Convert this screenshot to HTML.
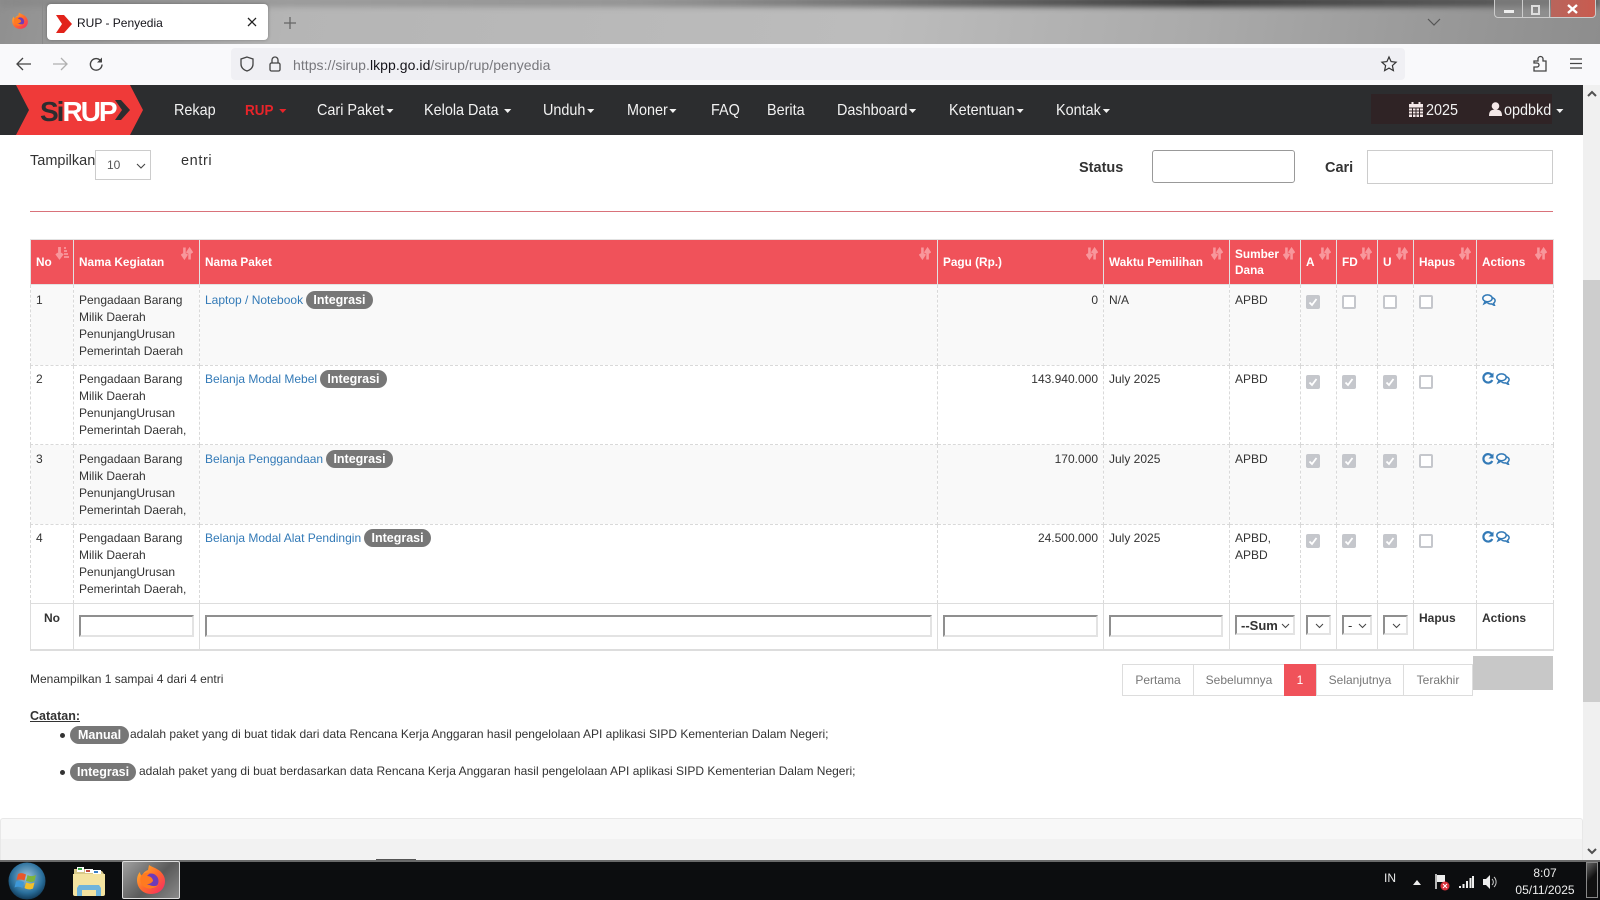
<!DOCTYPE html>
<html lang="id">
<head>
<meta charset="utf-8">
<title>RUP - Penyedia</title>
<style>
html,body{margin:0;padding:0;width:1600px;height:900px;overflow:hidden;background:#fff;font-family:"Liberation Sans",sans-serif;color:#333;}
.a{position:absolute;white-space:nowrap;}
svg{position:absolute;overflow:visible;}
#chrome{position:absolute;left:0;top:0;width:1600px;height:44px;background:linear-gradient(100deg,#8f8f8f 0%,#b5b5b5 18%,#bcbcbc 55%,#aaa 75%,#8d8d8d 100%);overflow:hidden;}
#chrome:before{content:"";position:absolute;left:0;right:0;top:-3px;height:10px;background:linear-gradient(90deg,rgba(120,120,120,.3),rgba(90,90,90,.4) 40%,rgba(30,30,30,.8) 75%,rgba(60,60,60,.6));filter:blur(3px);}
#tab{position:absolute;left:47px;top:4px;width:221px;height:36px;background:#fff;border-radius:4px;box-shadow:0 0 3px rgba(0,0,0,.3);}
#toolbar{position:absolute;left:0;top:44px;width:1600px;height:41px;background:#f9f9fb;}
#url{position:absolute;left:231px;top:48px;width:1174px;height:32px;background:#f0f0f4;border-radius:4px;}
#nav{position:absolute;left:0;top:85px;width:1583px;height:50px;background:#2c2d2f;}
.n{position:absolute;top:86px;height:50px;line-height:50px;font-size:16px;color:#f2f2f2;white-space:nowrap;transform:scaleX(.9);transform-origin:0 50%;}
.n i,.c{display:inline-block;width:0;height:0;border-left:4px solid transparent;border-right:4px solid transparent;border-top:4px solid currentColor;vertical-align:middle;margin-left:2px;}
#sb{position:absolute;left:1583px;top:85px;width:17px;height:775px;background:#f0f0f0;}
#th{position:absolute;left:1583px;top:280px;width:17px;height:422px;background:#cdcdcd;}
table{position:absolute;left:30px;top:239px;width:1523px;border-collapse:collapse;table-layout:fixed;font-size:12px;color:#333;}
td,th{box-sizing:border-box;padding:7px 5px 0;vertical-align:top;line-height:17px;position:relative;text-align:left;}
thead th{height:45px;background:#f0525a;color:#fff;font-weight:bold;font-size:11.8px;border:1px solid #e2e2e2;vertical-align:middle;padding:0 5px;white-space:normal;}
tbody td{border:1px dashed #d9d9d9;}
tr.r2 td{padding-top:5px;}
tr.r3 td{padding-top:6px;}
tr.o td{background:#f9f9f9;}
tr.f td{border:1px solid #ddd;height:47px;background:#fff;font-weight:bold;padding-top:6px;}
a{color:#337ab7;text-decoration:none;}
.b{display:inline-block;background:#777;color:#fff;font-weight:bold;font-size:12.5px;line-height:18px;height:18px;border-radius:10px;padding:0 7px;margin-top:-1px;vertical-align:top;}
.k{position:absolute;box-sizing:border-box;width:14px;height:14px;border:2px solid #c5c7cc;border-radius:2px;background:#fff;}
.k.y{background:#c5c7cc;}
.k.y svg{left:0;top:0;}
.i{position:absolute;box-sizing:border-box;background:#fff;border:2px solid;border-color:#8f8f8f #e3e3e3 #e3e3e3 #8f8f8f;}
.s{font-size:13px;font-weight:bold;line-height:17px;color:#333;overflow:hidden;}
.pg{position:absolute;box-sizing:border-box;top:664px;height:32px;line-height:30px;border:1px solid #ddd;font-size:12px;color:#777;text-align:center;background:#fff;}
.sort{top:7px;}
</style>
</head>
<body>
<svg width="0" height="0" style="position:absolute">
<defs>
<symbol id="so" viewBox="0 0 14 14"><path d="M4 0v10M1 7.500 4 12l3-4.500M10 14V4M7 6.500 10 2l3 4.500" fill="none" stroke="#f8979c" stroke-width="3"/></symbol>
<symbol id="cm" viewBox="0 0 14 12"><ellipse cx="5.500" cy="4.300" rx="4.700" ry="3.400" fill="#fff" fill-opacity=".5" stroke="#337ab7" stroke-width="1.500"/><path d="M3 7.500 2 9.800 5.500 8M9.500 3.500c2.500.5 4 2 3.500 3.800-.3 1-.8 1.500-1.500 2l1 2.200-3-1.600c-1.500.2-3-.2-4-1" fill="none" stroke="#337ab7" stroke-width="1.500"/></symbol>
<symbol id="rf" viewBox="0 0 12 12"><path d="M10 3.200A4.700 4.700 0 1 0 10.300 8" fill="none" stroke="#337ab7" stroke-width="2.200"/><path d="M11.500 .5v5h-5z" fill="#337ab7"/></symbol>
<symbol id="ck" viewBox="0 0 10 10"><path d="M1.500 5.500 4 8 8.500 2" fill="none" stroke="#fff" stroke-width="1.800"/></symbol>
<symbol id="ff" viewBox="0 0 32 32"><defs><linearGradient id="fg" x1="0" y1="0" x2="1" y2="1"><stop offset="0" stop-color="#ffbd2e"/><stop offset=".5" stop-color="#ff6a2b"/><stop offset="1" stop-color="#f5256b"/></linearGradient></defs><path d="M16 30C8 30 2 24 2 16c0-3 1-6 3-8 0 2 1 3 2 4 1-3 3-5 6-6l1-5c3 2 7 3 11 6 3 3 5 6 5 10 0 8-6 13-14 13z" fill="url(#fg)"/><circle cx="16" cy="17" r="7.500" fill="#6f3bb8"/><path d="M6 12c2-3 6-4 9-3l-3 3c3 0 6 2 6 5-2 3-6 4-9 2 4 1 9 5 14 2-4 5-14 5-17-2-1-3-1-5 0-7z" fill="#ff7a20"/></symbol>
</defs>
</svg>

<div id="chrome">
  <svg style="left:11px;top:12px" width="18" height="18"><use href="#ff" width="18" height="18"/></svg>
  <div class="a" style="left:42px;top:0;width:1px;height:44px;background:#8a8a8a"></div>
  <div id="tab"></div>
  <svg style="left:56px;top:15px" width="16" height="18"><path d="M0 0h8l8 9-8 9H0l6-9z" fill="#e2231a"/></svg>
  <div class="a" style="left:77px;top:14px;font-size:12px;line-height:18px;color:#15141a">RUP - Penyedia</div>
  <svg style="left:247px;top:17px" width="10" height="10"><path d="M1 1l8 8M9 1l-8 8" stroke="#222" stroke-width="1.300" fill="none"/></svg>
  <svg style="left:284px;top:17px" width="12" height="12"><path d="M6 0v12M0 6h12" stroke="#666" stroke-width="1.300" fill="none"/></svg>
  <svg style="left:1428px;top:19px" width="12" height="7"><path d="M0 0l6 6 6-6" stroke="#555" stroke-width="1.200" fill="none"/></svg>
  <div class="a" style="left:1494px;top:-2px;width:102px;height:20px;box-sizing:border-box;border:1px solid #ccc;border-radius:0 0 4px 4px;background:linear-gradient(90deg,rgba(140,140,140,.6) 0,rgba(140,140,140,.6) 56%,#b8655c 56%,#c95b4f 100%)"></div>
  <div class="a" style="left:1522px;top:0;width:1px;height:17px;background:#ccc"></div>
  <div class="a" style="left:1549px;top:0;width:1px;height:17px;background:#ccc"></div>
  <div class="a" style="left:1504px;top:10px;width:10px;height:3px;background:#eee"></div>
  <div class="a" style="left:1531px;top:5px;width:5px;height:6px;border:2px solid #ddd"></div>
  <svg style="left:1567px;top:4px" width="11" height="10"><path d="M1 1l9 8M10 1l-9 8" stroke="#fff" stroke-width="2.400" fill="none"/></svg>
</div>

<div id="toolbar"></div>
<div id="url"></div>
<svg style="left:16px;top:57px" width="16" height="14"><path d="M15 7H2M7 1 1 7l6 6" fill="none" stroke="#444" stroke-width="1.300"/></svg>
<svg style="left:52px;top:57px" width="16" height="14"><path d="M1 7h13M9 1l6 6-6 6" fill="none" stroke="#b0b0b0" stroke-width="1.300"/></svg>
<svg style="left:89px;top:57px" width="15" height="15"><path d="M13 7.500A5.800 5.800 0 1 1 11 3" fill="none" stroke="#444" stroke-width="1.400"/><path d="M13 .5v5H8z" fill="#444"/></svg>
<svg style="left:240px;top:56px" width="14" height="16"><path d="M7 1 1 3v5c0 4 3 6 6 7 3-1 6-3 6-7V3z" fill="none" stroke="#444" stroke-width="1.300"/></svg>
<svg style="left:269px;top:56px" width="12" height="16"><rect x="1" y="7" width="10" height="8" rx="1.500" fill="none" stroke="#444" stroke-width="1.300"/><path d="M3 7V4a3 3 0 0 1 6 0v3" fill="none" stroke="#444" stroke-width="1.300"/></svg>
<div class="a" style="left:293px;top:56px;font-size:14px;line-height:18px;color:#77777c;letter-spacing:.05px">https://sirup.<span style="color:#15141a">lkpp.go.id</span>/sirup/rup/penyedia</div>
<svg style="left:1381px;top:56px" width="16" height="16"><path d="M8 1l2.100 4.600 5 .6-3.700 3.400 1 5L8 12.100 3.600 14.600l1-5L.9 6.200l5-.6z" fill="none" stroke="#333" stroke-width="1.200"/></svg>
<svg style="left:1533px;top:55px" width="16" height="18"><path d="M1 6h4V4a2.500 2.500 0 0 1 5 0v2h3v10H1v-4h3a2 2 0 0 0 0-4H1z" fill="none" stroke="#444" stroke-width="1.300"/></svg>
<svg style="left:1570px;top:58px" width="12" height="11"><path d="M0 1h12M0 5.500h12M0 10h12" stroke="#444" stroke-width="1.200"/></svg>

<div id="nav"></div>
<svg style="left:16px;top:85px" width="128" height="50"><path d="M0 0H114L127 25 114 50H0L13 25z" fill="#ef3a39"/>
<text x="24" y="36" font-family="Liberation Sans" font-weight="bold" font-size="28" letter-spacing="-2" fill="#2c2d2f">Si<tspan fill="#fff">RUP</tspan></text>
<path d="M99 15h6l9 10-9 10h-6l7-10z" fill="#2c2d2f"/></svg>
<div class="n" style="left:174px">Rekap</div>
<div class="n" style="left:245px;color:#e8242a;font-weight:bold;font-size:15px">RUP <i></i></div>
<div class="n" style="left:317px">Cari Paket<i></i></div>
<div class="n" style="left:424px">Kelola Data <i></i></div>
<div class="n" style="left:543px">Unduh<i></i></div>
<div class="n" style="left:627px">Moner<i></i></div>
<div class="n" style="left:711px">FAQ</div>
<div class="n" style="left:767px">Berita</div>
<div class="n" style="left:837px">Dashboard<i></i></div>
<div class="n" style="left:949px">Ketentuan<i></i></div>
<div class="n" style="left:1056px">Kontak<i></i></div>
<div class="a" style="left:1371px;top:94px;width:181px;height:30px;background:#2f2325"></div>
<svg style="left:1409px;top:102px" width="14" height="15"><path d="M0 2h14v13H0z" fill="#f4e8e8"/><path d="M0 6h14M0 9h14M0 12h14M3.500 6v9M7 6v9M10.500 6v9" stroke="#2f2325"/><path d="M3.500 0v3M10.500 0v3" stroke="#f4e8e8" stroke-width="2"/></svg>
<div class="n" style="left:1426px">2025</div>
<svg style="left:1489px;top:102px" width="13" height="15"><circle cx="6.500" cy="4" r="3.800" fill="#f4e8e8"/><path d="M0 14c0-5 2-6.500 6.500-6.500S13 9 13 14z" fill="#f4e8e8"/></svg>
<div class="n" style="left:1504px">opdbkd <i style="margin-left:1px"></i></div>

<div id="sb"></div>
<div id="th"></div>
<svg style="left:1587px;top:90px" width="10" height="7"><path d="M1 6l4-4 4 4" stroke="#505050" stroke-width="2" fill="none"/></svg>
<svg style="left:1587px;top:848px" width="10" height="7"><path d="M1 1l4 4 4-4" stroke="#505050" stroke-width="2" fill="none"/></svg>

<!-- filter bar -->
<div class="a" style="left:30px;top:152px;width:65px;overflow:hidden;font-size:14.500px;line-height:18px;color:#333">Tampilkan</div>
<div class="a" style="left:95px;top:150px;box-sizing:border-box;width:56px;height:30px;background:#fff;border:1px solid #ccc;font-size:12px;line-height:28px;padding-left:11px;color:#555">10</div>
<svg style="left:136px;top:163px" width="10" height="6"><path d="M1 1l4 4 4-4" stroke="#444" stroke-width="1.100" fill="none"/></svg>
<div class="a" style="left:181px;top:152px;font-size:14.500px;line-height:18px;letter-spacing:.6px">entri</div>
<div class="a" style="left:1079px;top:159px;font-size:14.500px;font-weight:bold;line-height:18px">Status</div>
<div class="a" style="left:1152px;top:150px;box-sizing:border-box;width:143px;height:33px;border:1px solid #999;border-radius:3px;background:#fff"></div>
<div class="a" style="left:1325px;top:159px;font-size:14.500px;font-weight:bold;line-height:18px">Cari</div>
<div class="a" style="left:1367px;top:150px;box-sizing:border-box;width:186px;height:34px;border:1px solid #ccc;background:#fff"></div>
<div class="a" style="left:30px;top:211px;width:1523px;height:1px;background:#d9727a"></div>

<table>
<colgroup><col style="width:43px"><col style="width:126px"><col style="width:738px"><col style="width:166px"><col style="width:126px"><col style="width:71px"><col style="width:36px"><col style="width:41px"><col style="width:36px"><col style="width:63px"><col style="width:77px"></colgroup>
<thead><tr>
<th>No<svg class="sort" style="left:25px" width="13" height="13"><path d="M3.500 0v9M.5 6.500l3 4 3-4" stroke="#f8979c" stroke-width="2.800" fill="none"/><path d="M8 1h2M8 4h3M8 7h4M8 10h5" stroke="#f8979c" stroke-width="1.800"/></svg></th>
<th>Nama Kegiatan<svg class="sort" style="left:107px" width="12" height="13"><use href="#so" width="12" height="13"/></svg></th>
<th>Nama Paket<svg class="sort" style="left:719px" width="12" height="13"><use href="#so" width="12" height="13"/></svg></th>
<th>Pagu (Rp.)<svg class="sort" style="left:148px" width="12" height="13"><use href="#so" width="12" height="13"/></svg></th>
<th>Waktu Pemilihan<svg class="sort" style="left:107px" width="12" height="13"><use href="#so" width="12" height="13"/></svg></th>
<th style="line-height:16.500px">Sumber<br>Dana<svg class="sort" style="left:53px" width="12" height="13"><use href="#so" width="12" height="13"/></svg></th>
<th>A<svg class="sort" style="left:18px" width="12" height="13"><use href="#so" width="12" height="13"/></svg></th>
<th>FD<svg class="sort" style="left:23px" width="12" height="13"><use href="#so" width="12" height="13"/></svg></th>
<th>U<svg class="sort" style="left:18px" width="12" height="13"><use href="#so" width="12" height="13"/></svg></th>
<th>Hapus<svg class="sort" style="left:45px" width="12" height="13"><use href="#so" width="12" height="13"/></svg></th>
<th>Actions<svg class="sort" style="left:58px" width="12" height="13"><use href="#so" width="12" height="13"/></svg></th>
</tr></thead>
<tbody>
<tr class="o" style="height:81px"><td>1</td><td>Pengadaan Barang<br>Milik Daerah<br>PenunjangUrusan<br>Pemerintah Daerah</td><td><a>Laptop / Notebook</a> <span class="b">Integrasi</span></td><td style="text-align:right">0</td><td>N/A</td><td>APBD</td><td></td><td></td><td></td><td></td><td></td></tr>
<tr class="r2" style="height:79px"><td>2</td><td>Pengadaan Barang<br>Milik Daerah<br>PenunjangUrusan<br>Pemerintah Daerah,</td><td><a>Belanja Modal Mebel</a> <span class="b">Integrasi</span></td><td style="text-align:right">143.940.000</td><td>July 2025</td><td>APBD</td><td></td><td></td><td></td><td></td><td></td></tr>
<tr class="o r3" style="height:80px"><td>3</td><td>Pengadaan Barang<br>Milik Daerah<br>PenunjangUrusan<br>Pemerintah Daerah,</td><td><a>Belanja Penggandaan</a> <span class="b">Integrasi</span></td><td style="text-align:right">170.000</td><td>July 2025</td><td>APBD</td><td></td><td></td><td></td><td></td><td></td></tr>
<tr class="r2" style="height:79px"><td>4</td><td>Pengadaan Barang<br>Milik Daerah<br>PenunjangUrusan<br>Pemerintah Daerah,</td><td><a>Belanja Modal Alat Pendingin</a> <span class="b">Integrasi</span></td><td style="text-align:right">24.500.000</td><td>July 2025</td><td>APBD,<br>APBD</td><td></td><td></td><td></td><td></td><td></td></tr>
<tr class="f"><td style="text-align:center">No</td><td></td><td></td><td></td><td></td><td></td><td></td><td></td><td></td><td>Hapus</td><td>Actions</td></tr>
</tbody>
</table>
<div class="a" style="left:30px;top:649px;width:1523px;height:2px;background:#ddd"></div>

<!-- checkboxes -->
<div class="k y" style="left:1306px;top:295px"><svg width="10" height="10"><use href="#ck" width="10" height="10"/></svg></div>
<div class="k" style="left:1342px;top:295px"></div><div class="k" style="left:1383px;top:295px"></div><div class="k" style="left:1419px;top:295px"></div>
<div class="k y" style="left:1306px;top:375px"><svg width="10" height="10"><use href="#ck" width="10" height="10"/></svg></div>
<div class="k y" style="left:1342px;top:375px"><svg width="10" height="10"><use href="#ck" width="10" height="10"/></svg></div>
<div class="k y" style="left:1383px;top:375px"><svg width="10" height="10"><use href="#ck" width="10" height="10"/></svg></div>
<div class="k" style="left:1419px;top:375px"></div>
<div class="k y" style="left:1306px;top:454px"><svg width="10" height="10"><use href="#ck" width="10" height="10"/></svg></div>
<div class="k y" style="left:1342px;top:454px"><svg width="10" height="10"><use href="#ck" width="10" height="10"/></svg></div>
<div class="k y" style="left:1383px;top:454px"><svg width="10" height="10"><use href="#ck" width="10" height="10"/></svg></div>
<div class="k" style="left:1419px;top:454px"></div>
<div class="k y" style="left:1306px;top:534px"><svg width="10" height="10"><use href="#ck" width="10" height="10"/></svg></div>
<div class="k y" style="left:1342px;top:534px"><svg width="10" height="10"><use href="#ck" width="10" height="10"/></svg></div>
<div class="k y" style="left:1383px;top:534px"><svg width="10" height="10"><use href="#ck" width="10" height="10"/></svg></div>
<div class="k" style="left:1419px;top:534px"></div>

<!-- action icons -->
<svg style="left:1482px;top:294px" width="14" height="12"><use href="#cm" width="14" height="12"/></svg>
<svg style="left:1482px;top:372px" width="12" height="12"><use href="#rf" width="12" height="12"/></svg><svg style="left:1496px;top:373px" width="14" height="12"><use href="#cm" width="14" height="12"/></svg>
<svg style="left:1482px;top:453px" width="12" height="12"><use href="#rf" width="12" height="12"/></svg><svg style="left:1496px;top:453px" width="14" height="12"><use href="#cm" width="14" height="12"/></svg>
<svg style="left:1482px;top:531px" width="12" height="12"><use href="#rf" width="12" height="12"/></svg><svg style="left:1496px;top:531px" width="14" height="12"><use href="#cm" width="14" height="12"/></svg>

<!-- filter inputs -->
<div class="i" style="left:79px;top:615px;width:115px;height:22px"></div>
<div class="i" style="left:205px;top:615px;width:727px;height:22px"></div>
<div class="i" style="left:943px;top:615px;width:155px;height:22px"></div>
<div class="i" style="left:1109px;top:615px;width:114px;height:22px"></div>
<div class="i s" style="left:1235px;top:615px;width:60px;height:20px;padding-left:4px">--Sum</div>
<svg style="left:1281px;top:623px" width="9" height="6"><path d="M1 1l3.500 3.500L8 1" stroke="#444" fill="none"/></svg>
<div class="i" style="left:1306px;top:615px;width:25px;height:20px"></div>
<svg style="left:1315px;top:623px" width="9" height="6"><path d="M1 1l3.500 3.500L8 1" stroke="#444" fill="none"/></svg>
<div class="i s" style="left:1342px;top:615px;width:30px;height:20px;padding-left:4px;font-weight:normal">-</div>
<svg style="left:1358px;top:623px" width="9" height="6"><path d="M1 1l3.500 3.500L8 1" stroke="#444" fill="none"/></svg>
<div class="i" style="left:1383px;top:615px;width:25px;height:20px"></div>
<svg style="left:1392px;top:623px" width="9" height="6"><path d="M1 1l3.500 3.500L8 1" stroke="#444" fill="none"/></svg>

<!-- info / pagination -->
<div class="a" style="left:30px;top:670px;font-size:12px;line-height:18px">Menampilkan 1 sampai 4 dari 4 entri</div>
<div class="pg" style="left:1122px;width:72px">Pertama</div>
<div class="pg" style="left:1193px;width:92px">Sebelumnya</div>
<div class="pg" style="left:1284px;width:32px;background:#f0525a;border-color:#f0525a;color:#fff">1</div>
<div class="pg" style="left:1316px;width:88px">Selanjutnya</div>
<div class="pg" style="left:1403px;width:70px">Terakhir</div>
<div class="a" style="left:1473px;top:656px;width:80px;height:34px;background:#c8c8c8"></div>

<div class="a" style="left:30px;top:707px;font-size:12.500px;line-height:18px;font-weight:bold;text-decoration:underline">Catatan:</div>
<div class="a" style="left:60px;top:733px;width:5px;height:5px;border-radius:50%;background:#333"></div>
<span class="b a" style="left:70px;top:726px;height:18px;line-height:18px;margin:0;padding:0 8px">Manual</span>
<div class="a" style="left:130px;top:725px;font-size:12px;line-height:18px">adalah paket yang di buat tidak dari data Rencana Kerja Anggaran hasil pengelolaan API aplikasi SIPD Kementerian Dalam Negeri;</div>
<div class="a" style="left:60px;top:770px;width:5px;height:5px;border-radius:50%;background:#333"></div>
<span class="b a" style="left:70px;top:763px;height:18px;line-height:18px;margin:0;padding:0 7px">Integrasi</span>
<div class="a" style="left:139px;top:762px;font-size:12px;line-height:18px">adalah paket yang di buat berdasarkan data Rencana Kerja Anggaran hasil pengelolaan API aplikasi SIPD Kementerian Dalam Negeri;</div>

<!-- footer -->
<div class="a" style="left:0;top:818px;width:1583px;height:42px;box-sizing:border-box;border:1px solid #e8e8e8;border-bottom:0;border-radius:3px 3px 0 0;background:linear-gradient(#f8f8f8 0,#f8f8f8 20px,#f2f2f2 20px)"></div>
<div class="a" style="left:376px;top:859px;width:40px;height:1px;background:#555"></div>

<!-- taskbar -->
<div class="a" style="left:0;top:860px;width:1600px;height:40px;background:#0c0d0f;border-top:2px solid #6a6a6a;box-sizing:border-box"></div>
<svg style="left:8px;top:862px" width="38" height="38">
<defs><radialGradient id="orb" cx=".5" cy=".4" r=".6"><stop offset="0" stop-color="#9cc4dc"/><stop offset=".7" stop-color="#2a6f9c"/><stop offset="1" stop-color="#123a58"/></radialGradient></defs>
<circle cx="19" cy="19" r="18.500" fill="url(#orb)"/>
<path d="M10 12c3-1.500 5-1 8 .5l-1.500 6c-2.500-1-5-1.500-8-.5z" fill="#e8562a"/>
<path d="M19.500 13c3 1.500 5 1.500 8.500 0l-1.500 6c-3 1.500-5 1-8.500 0z" fill="#7db43c"/>
<path d="M8 19.500c3-1 5-.5 8 .5l-1.500 6c-2.500-1.500-5-1.500-8-.5z" fill="#3e98d8"/>
<path d="M18 20.500c3 1 5 1.500 8.500 0l-1.500 6c-3 1.500-6 1-8.500-.5z" fill="#f3bf2a"/>
</svg>
<svg style="left:73px;top:866px" width="32" height="31">
<path d="M1 3h12l2 2h14l2 3v14H1z" fill="#d8c98a"/>
<rect x="4" y="1" width="7" height="5" fill="#fff"/><rect x="5" y="2" width="4" height="2" fill="#3aa648"/>
<rect x="12" y="3" width="8" height="4" fill="#fff"/><rect x="13" y="4" width="4" height="2" fill="#c24a3c"/>
<rect x="20" y="4" width="8" height="5" fill="#fff"/><rect x="21" y="5" width="4" height="2" fill="#3a80c8"/>
<path d="M0 8h32v20a2 2 0 0 1-2 2H2a2 2 0 0 1-2-2z" fill="#f4e3a0"/>
<path d="M4 30v-8l2-3h20l2 3v8h-5v-6H9v6z" fill="#6fb4dc"/>
</svg>
<div class="a" style="left:122px;top:861px;width:58px;height:38px;box-sizing:border-box;border:1px solid #ddd;border-radius:2px;background:linear-gradient(135deg,#a0a0a0,#5a5a5a 55%,#8a8a8a)"></div>
<svg style="left:135px;top:864px" width="32" height="32"><use href="#ff" width="32" height="32"/></svg>
<div class="a" style="left:1384px;top:869px;font-size:12px;line-height:18px;color:#e8e8e8">IN</div>
<svg style="left:1413px;top:880px" width="8" height="5"><path d="M0 5l4-5 4 5z" fill="#eee"/></svg>
<svg style="left:1435px;top:874px" width="16" height="18"><path d="M1 0v15" stroke="#eee" stroke-width="1.500"/><path d="M2 1h8v7H2z" fill="#eee"/><circle cx="10" cy="12" r="4.500" fill="#d8303a"/><path d="M8 10l4 4M12 10l-4 4" stroke="#fff"/></svg>
<svg style="left:1459px;top:876px" width="15" height="12"><path d="M1 10v2M4.500 8v4M8 5v7M11.500 2v10M14 0v12" stroke="#eee" stroke-width="2"/></svg>
<svg style="left:1483px;top:875px" width="15" height="14"><path d="M0 4h3l4-4v14l-4-4H0z" fill="#eee"/><path d="M9 4a4 4 0 0 1 0 6M11 2a7 7 0 0 1 0 10" stroke="#ccc" fill="none"/></svg>
<div class="a" style="left:1515px;top:864px;width:60px;text-align:center;font-size:12px;line-height:18px;color:#eee">8:07</div>
<div class="a" style="left:1515px;top:881px;width:60px;text-align:center;font-size:12px;line-height:18px;color:#eee">05/11/2025</div>
<div class="a" style="left:1586px;top:862px;width:12px;height:36px;box-sizing:border-box;border:1px solid #888;background:linear-gradient(135deg,#666,#111 45%)"></div>
</body>
</html>
